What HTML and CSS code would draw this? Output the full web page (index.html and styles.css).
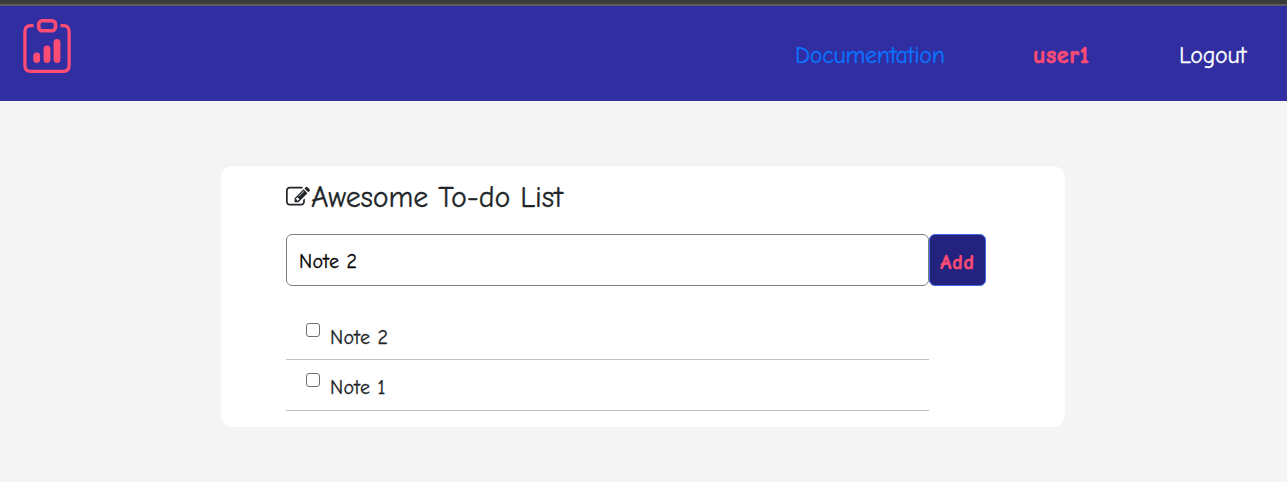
FILE: index.html
```html
<!DOCTYPE html>
<html lang="en">
<head>
<meta charset="utf-8">
<title>Awesome To-do List</title>
<link rel="stylesheet" href="styles.css">
</head>
<body>
<header class="navbar">
  <svg class="logo" viewBox="0 0 48 54" fill="none" stroke="currentColor">
    <path d="M10.5 6.7H7.5Q1.9 6.7 1.9 12.5V46.5Q1.9 52.3 7.5 52.3H40.5Q46.1 52.3 46.1 46.5V12.5Q46.1 6.7 40.5 6.7H37.5" stroke-width="3.3"/>
    <rect x="15.7" y="1.8" width="16.8" height="10" rx="3.6" stroke-width="3.6"/>
    <path d="M13.7 36.8V40.5M24 30V40.5M34 23.5V40.5" stroke-width="6.8" stroke-linecap="round"/>
  </svg>
  <nav class="nav-links">
    <a class="nav-item nav-docs">Documentation</a>
    <a class="nav-item nav-user">user1</a>
    <a class="nav-item nav-logout">Logout</a>
  </nav>
</header>
<main class="card">
  <h1 class="title">
    <svg class="edit-icon" viewBox="0 0 1792 1792" fill="currentColor"><path d="M888 1184l116-116-152-152-116 116v56h96v96h56zm440-720q-16-16-33 1l-350 350q-17 17-1 33t33-1l350-350q17-17 1-33zm80 594v190q0 119-84.5 203.5t-203.5 84.5h-832q-119 0-203.5-84.5t-84.5-203.5v-832q0-119 84.5-203.5t203.5-84.5h832q63 0 117 25 15 7 18 23 3 17-9 29l-49 49q-14 14-32 8-23-6-45-6h-832q-66 0-113 47t-47 113v832q0 66 47 113t113 47h832q66 0 113-47t47-113v-126q0-13 9-22l64-64q15-15 35-7t20 29zm-96-738l288 288-672 672h-288v-288zm444 132l-92 92-288-288 92-92q28-28 68-28t68 28l152 152q28 28 28 68t-28 68z"/></svg><span>Awesome To-do List</span>
  </h1>
  <form class="add-form">
    <input class="note-input" type="text" value="Note 2">
    <button class="add-button" type="button">Add</button>
  </form>
  <ul class="notes">
    <li class="note"><input class="check" type="checkbox"><span class="note-text">Note 2</span></li>
    <li class="note note-last"><input class="check" type="checkbox"><span class="note-text">Note 1</span></li>
  </ul>
</main>
</body>
</html>
```
FILE: styles.css
```css
* { box-sizing: border-box; }
body {
  margin: 0;
  min-height: 482px;
  background: #f4f4f4;
  color: #212529;
  font-family: "Comic Sans MS", "Comic Neue", Lato, sans-serif;
  -webkit-text-stroke: 0.3px currentColor;
}
.navbar {
  display: flex;
  justify-content: space-between;
  height: 101px;
  padding: 13px 40px 0 23px;
  border-top: 4px solid #3b3b3b;
  background: linear-gradient(#5c5c5c 2px, #302ea0 2px);
}
.logo { width: 48px; height: 54px; margin-top: 2px; color: #ff4c74; }
.nav-links { display: flex; gap: 89px; padding-top: 22px; }
.nav-item { font-size: 24px; line-height: 32px; white-space: nowrap; }
.nav-docs { width: 149px; color: #0b74ff; letter-spacing: -0.3px; }
.nav-user { width: 57px; color: #ff4c74; font-weight: 700; letter-spacing: 0.6px; -webkit-text-stroke-width: 0.6px; }
.nav-logout { width: 68px; color: #fff; letter-spacing: -0.3px; }
.card {
  width: 844px;
  height: 261px;
  margin: 65px 0 0 221px;
  padding: 12px 65px 0;
  border-radius: 12px;
  background: #fff;
}
.title {
  display: flex;
  align-items: center;
  height: 38px;
  margin: 0 0 18px;
  font-size: 30px;
  font-weight: 400;
  letter-spacing: -0.1px;
  white-space: nowrap;
}
.edit-icon { flex: none; width: 24px; height: 24px; margin-right: 1px; }
.add-form { display: flex; height: 52px; }
.note-input {
  width: 643px;
  padding: 2px 12px 0;
  border: 1px solid #808080;
  border-radius: 6px;
  background: #fff;
  color: #000;
  font: inherit;
  font-size: 20px;
  letter-spacing: 0.4px;
}
.add-button {
  width: 57px;
  padding: 4px 0 0;
  border: 1px solid #4169e1;
  border-radius: 6px;
  background: #23227f;
  color: #ff4c74;
  font: inherit;
  font-size: 20px;
  font-weight: 700;
  letter-spacing: 0.8px;
  -webkit-text-stroke-width: 0.5px;
}
.notes { width: 643px; margin: 24px 0 0; padding: 0; list-style: none; }
.note {
  display: flex;
  align-items: flex-start;
  height: 50px;
  padding: 13px 0 0 20px;
  border-bottom: 1px solid #c0c0c0;
}
.note-last { height: 51px; }
.check {
  appearance: none;
  width: 14px;
  height: 14px;
  margin: 0 10px 0 0;
  border: 1px solid #707070;
  border-radius: 3px;
  background: #fff;
}
.note-text { font-size: 20px; line-height: 29px; letter-spacing: 0.4px; }
```
